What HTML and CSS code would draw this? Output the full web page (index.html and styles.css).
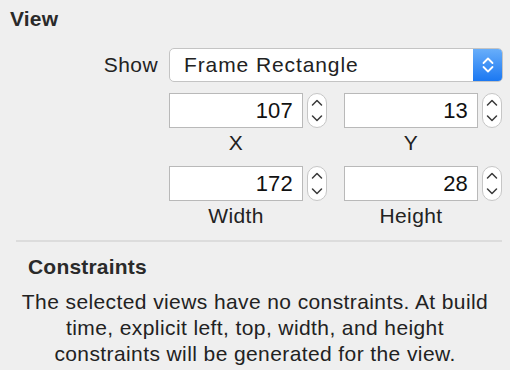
FILE: index.html
```html
<!DOCTYPE html>
<html>
<head>
<meta charset="utf-8">
<title>View Inspector</title>
<link rel="stylesheet" href="styles.css">
</head>
<body>
<div class="inspector">
  <h2 class="section-title">View</h2>

  <div class="show-row">
    <span class="show-label">Show</span>
    <div class="popup">
      <span class="popup-text">Frame Rectangle</span>
      <span class="popup-arrows">
        <svg width="12" height="18" viewBox="0 0 12 18"><path d="M1.5 7 L6 2.5 L10.5 7 M1.5 11 L6 15.5 L10.5 11" fill="none" stroke="#fff" stroke-width="1.8" stroke-linecap="round" stroke-linejoin="round"/></svg>
      </span>
    </div>
  </div>

  <div class="frame-grid">
    <div class="cell">
      <div class="field-wrap">
        <div class="field">107</div>
        <div class="stepper"><svg width="20" height="35" viewBox="0 0 20 35"><path d="M5.5 12 L10 7.5 L14.5 12 M5.5 23 L10 27.5 L14.5 23" fill="none" stroke="#3a3a3a" stroke-width="1.5" stroke-linecap="round" stroke-linejoin="round"/></svg></div>
      </div>
      <div class="caption">X</div>
    </div>
    <div class="cell">
      <div class="field-wrap">
        <div class="field">13</div>
        <div class="stepper"><svg width="20" height="35" viewBox="0 0 20 35"><path d="M5.5 12 L10 7.5 L14.5 12 M5.5 23 L10 27.5 L14.5 23" fill="none" stroke="#3a3a3a" stroke-width="1.5" stroke-linecap="round" stroke-linejoin="round"/></svg></div>
      </div>
      <div class="caption">Y</div>
    </div>
    <div class="cell">
      <div class="field-wrap">
        <div class="field">172</div>
        <div class="stepper"><svg width="20" height="35" viewBox="0 0 20 35"><path d="M5.5 12 L10 7.5 L14.5 12 M5.5 23 L10 27.5 L14.5 23" fill="none" stroke="#3a3a3a" stroke-width="1.5" stroke-linecap="round" stroke-linejoin="round"/></svg></div>
      </div>
      <div class="caption">Width</div>
    </div>
    <div class="cell">
      <div class="field-wrap">
        <div class="field">28</div>
        <div class="stepper"><svg width="20" height="35" viewBox="0 0 20 35"><path d="M5.5 12 L10 7.5 L14.5 12 M5.5 23 L10 27.5 L14.5 23" fill="none" stroke="#3a3a3a" stroke-width="1.5" stroke-linecap="round" stroke-linejoin="round"/></svg></div>
      </div>
      <div class="caption">Height</div>
    </div>
  </div>

  <hr class="divider">

  <h2 class="section-title constraints-title">Constraints</h2>
  <p class="note">The selected views have no constraints. At build<br>time, explicit left, top, width, and height<br>constraints will be generated for the view.</p>
</div>
</body>
</html>
```

FILE: styles.css
```css
body {
   margin: 0;
   background-color: #efefef;
   font-family: "Liberation Sans", Arial, sans-serif;
   color: #222;
   letter-spacing: 0.4px;
}

.inspector {
   width: 510px;
   height: 370px;
   overflow: hidden;
}

.section-title {
   margin: 0;
   padding: 8px 0 0 10px;
   font-size: 21px;
   line-height: 22px;
   font-weight: bold;
   color: #2a2a2a;
   letter-spacing: 0.2px;
}

.show-row {
   display: flex;
   align-items: center;
   margin-top: 18px;
}

.show-label {
   box-sizing: border-box;
   width: 169px;
   padding-right: 11px;
   text-align: right;
   font-size: 21px;
}

.popup {
   display: flex;
   width: 334px;
   height: 34px;
   box-sizing: border-box;
   border: 1px solid #c4c4c4;
   border-radius: 5px;
   background: #fff;
   overflow: hidden;
}

.popup-text {
   flex: 1;
   padding-left: 14px;
   font-size: 21px;
   line-height: 32px;
   letter-spacing: 0.9px;
}

.popup-arrows {
   width: 29px;
   display: flex;
   align-items: center;
   justify-content: center;
   background: linear-gradient(#68aefa, #1b78f2);
}

.frame-grid {
   display: grid;
   grid-template-columns: 158px 159px;
   column-gap: 17px;
   row-gap: 11px;
   margin: 11px 0 0 169px;
}

.field-wrap {
   display: flex;
   gap: 4px;
}

.field {
   width: 134px;
   height: 35px;
   box-sizing: border-box;
   border: 1px solid #b9b9b9;
   background: #fff;
   text-align: right;
   padding-right: 9px;
   font-size: 22px;
   line-height: 33px;
   color: #111;
   letter-spacing: 0.2px;
}

.stepper {
   width: 20px;
   height: 35px;
   box-sizing: border-box;
   border: 1px solid #c6c6c6;
   border-radius: 10px;
   background: #fff;
   display: flex;
   align-items: center;
   justify-content: center;
}

.stepper svg {
   display: block;
   flex: none;
}

.caption {
   width: 134px;
   text-align: center;
   font-size: 21px;
   line-height: 24px;
   margin-top: 3px;
}

.divider {
   margin: 12px 8px 0 16px;
   border: none;
   border-top: 2px solid #dcdcdc;
}

.constraints-title {
   padding: 14px 0 0 28px;
}

.note {
   margin: 11px 0 0 0;
   text-align: center;
   font-size: 21px;
   line-height: 26px;
   white-space: nowrap;
}
```
